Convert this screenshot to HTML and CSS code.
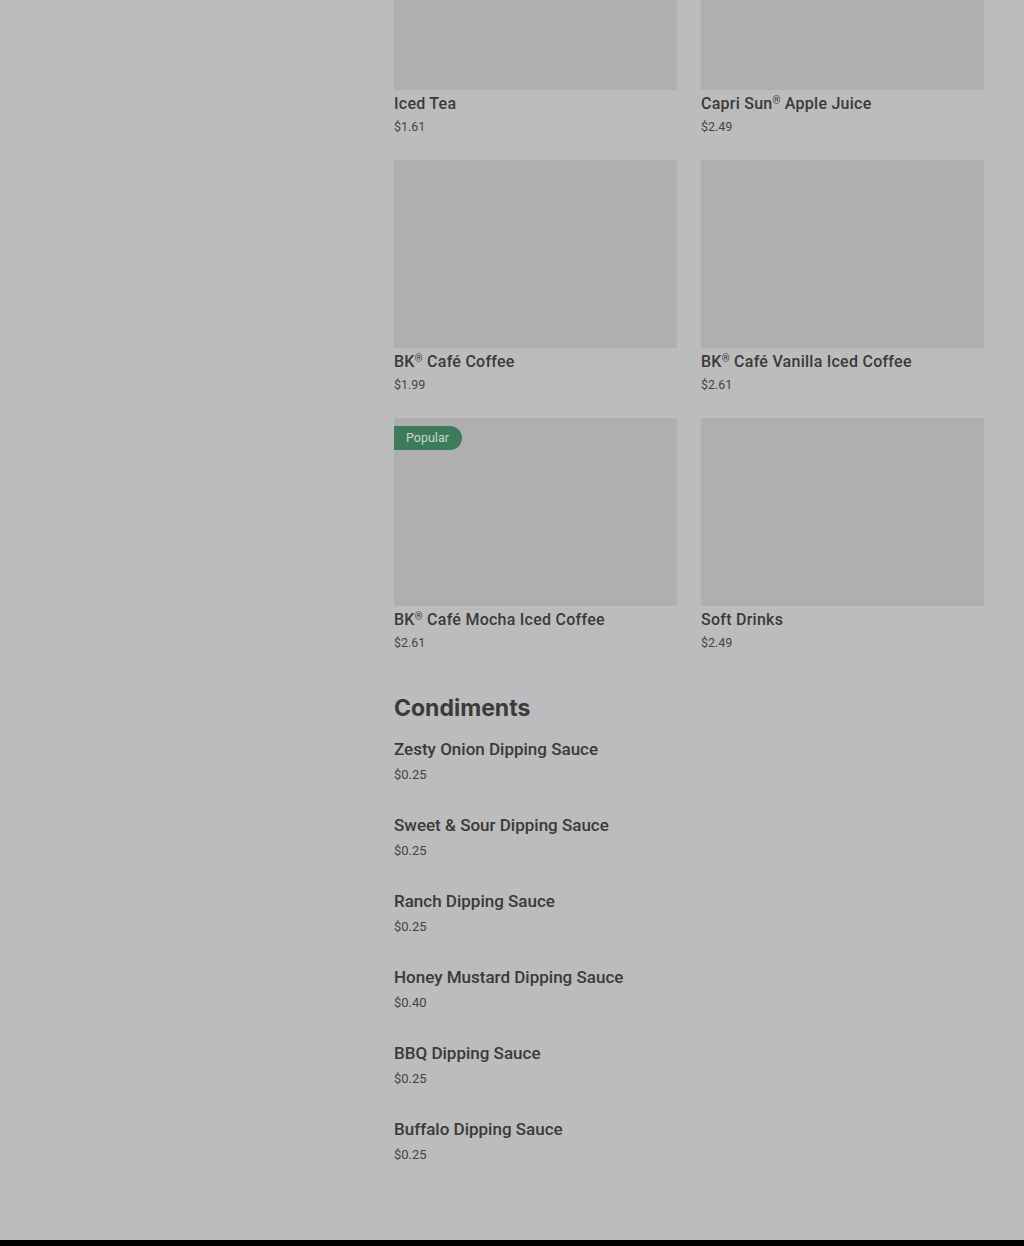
FILE: index.html
```html
<!DOCTYPE html>
<html>
<head>
<meta charset="utf-8">
<link rel="stylesheet" href="styles.css">
</head>
<body>
<div class="page">
  <aside class="sidebar"></aside>
  <main class="content">
    <div class="grid">
      <div class="card"><div class="thumb"></div><div class="name">Iced Tea</div><div class="price">$1.61</div></div>
      <div class="card"><div class="thumb"></div><div class="name">Capri Sun<span class="reg">®</span> Apple Juice</div><div class="price">$2.49</div></div>
      <div class="card"><div class="thumb"></div><div class="name">BK<span class="reg">®</span> Café Coffee</div><div class="price">$1.99</div></div>
      <div class="card"><div class="thumb"></div><div class="name">BK<span class="reg">®</span> Café Vanilla Iced Coffee</div><div class="price">$2.61</div></div>
      <div class="card"><div class="thumb"><span class="badge">Popular</span></div><div class="name">BK<span class="reg">®</span> Café Mocha Iced Coffee</div><div class="price">$2.61</div></div>
      <div class="card"><div class="thumb"></div><div class="name">Soft Drinks</div><div class="price">$2.49</div></div>
    </div>
    <h2 class="section-title">Condiments</h2>
    <ul class="list">
      <li class="item"><div class="name">Zesty Onion Dipping Sauce</div><div class="price">$0.25</div></li>
      <li class="item"><div class="name">Sweet &amp; Sour Dipping Sauce</div><div class="price">$0.25</div></li>
      <li class="item"><div class="name">Ranch Dipping Sauce</div><div class="price">$0.25</div></li>
      <li class="item"><div class="name">Honey Mustard Dipping Sauce</div><div class="price">$0.40</div></li>
      <li class="item"><div class="name">BBQ Dipping Sauce</div><div class="price">$0.25</div></li>
      <li class="item"><div class="name">Buffalo Dipping Sauce</div><div class="price">$0.25</div></li>
    </ul>
  </main>
</div>
<footer class="footer"></footer>
</body>
</html>
```
FILE: styles.css
```css
html, body {
  margin: 0;
  padding: 0;
  background: #bcbcbc;
  height: 1246px;
  overflow: hidden;
}
body {
  font-family: Roboto, "Liberation Sans", sans-serif;
  color: #3a3a3a;
}
.page {
  display: flex;
  height: 1240px;
  overflow: hidden;
}
.sidebar {
  width: 394px;
  flex: none;
}
.content {
  width: 590px;
  flex: none;
  margin-top: -98px;
}
.grid {
  display: grid;
  grid-template-columns: 283px 283px;
  column-gap: 24px;
  row-gap: 25px;
}
.thumb {
  height: 188px;
  background: #afafaf;
  position: relative;
}
.badge {
  position: absolute;
  left: 0;
  top: 8px;
  height: 24px;
  line-height: 24px;
  padding: 0 13px 0 12px;
  background: #3c7c5d;
  color: #c9d6cf;
  font-size: 12.5px;
  border-radius: 0 12px 12px 0;
}
.name {
  font-size: 16px;
  font-weight: 500;
  line-height: 18px;
  margin-top: 5px;
  letter-spacing: 0.25px;
}
.reg {
  font-size: 10px;
  vertical-align: 5px;
  line-height: 0;
}
.price {
  font-size: 12.5px;
  line-height: 16px;
  margin-top: 6px;
  font-weight: 400;
  color: #444;
}
.section-title {
  font-family: Inter, Roboto, sans-serif;
  font-size: 23px;
  font-weight: 700;
  line-height: 32px;
  margin: 41px 0 0;
}
.list {
  list-style: none;
  margin: 16px 0 0;
  padding: 0;
  display: flex;
  flex-direction: column;
  gap: 33px;
}
.item .name {
  margin-top: 0;
  font-size: 17px;
  letter-spacing: 0;
}
.item .price {
  margin-top: 9px;
  font-size: 13px;
}
.footer {
  height: 6px;
  background: #000;
}
```
